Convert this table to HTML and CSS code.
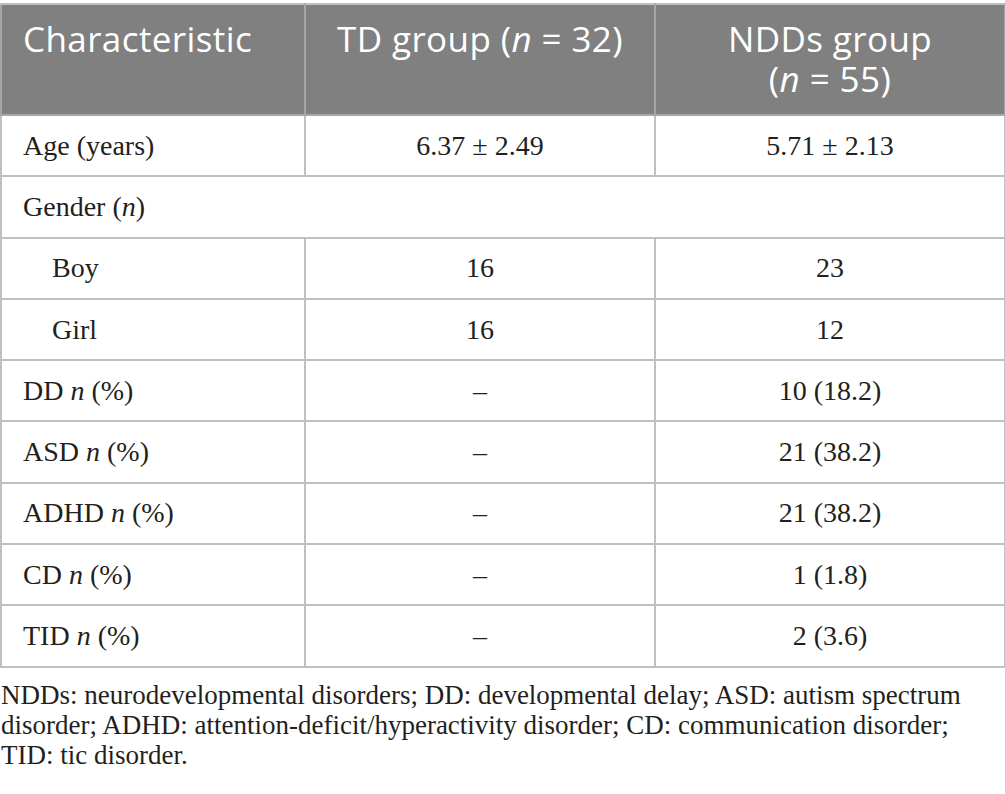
FILE: index.html
```html
<!DOCTYPE html>
<html lang="en">
<head>
<meta charset="utf-8">
<title>Table</title>
<link rel="stylesheet" href="styles.css">
</head>
<body>
<div class="page">
  <table class="data">
    <colgroup>
      <col class="c1">
      <col class="c2">
      <col class="c3">
    </colgroup>
    <thead>
      <tr>
        <th class="left">Characteristic</th>
        <th>TD group (<i>n</i> = 32)</th>
        <th>NDDs group<br>(<i>n</i> = 55)</th>
      </tr>
    </thead>
    <tbody>
      <tr><td class="label">Age (years)</td><td>6.37 ± 2.49</td><td>5.71 ± 2.13</td></tr>
      <tr><td class="label" colspan="3">Gender (<i>n</i>)</td></tr>
      <tr><td class="label sub">Boy</td><td>16</td><td>23</td></tr>
      <tr><td class="label sub">Girl</td><td>16</td><td>12</td></tr>
      <tr><td class="label">DD <i>n</i> (%)</td><td>–</td><td>10 (18.2)</td></tr>
      <tr><td class="label">ASD <i>n</i> (%)</td><td>–</td><td>21 (38.2)</td></tr>
      <tr><td class="label">ADHD <i>n</i> (%)</td><td>–</td><td>21 (38.2)</td></tr>
      <tr><td class="label">CD <i>n</i> (%)</td><td>–</td><td>1 (1.8)</td></tr>
      <tr><td class="label">TID <i>n</i> (%)</td><td>–</td><td>2 (3.6)</td></tr>
    </tbody>
  </table>
  <p class="note">NDDs: neurodevelopmental disorders; DD: developmental delay; ASD: autism spectrum disorder; ADHD: attention-deficit/hyperactivity disorder; CD: communication disorder; TID: tic disorder.</p>
</div>
</body>
</html>
```
FILE: styles.css
```css
html, body {
  margin: 0;
  padding: 0;
  background: #ffffff;
}

.page {
  width: 1005px;
  padding-top: 3px;
  font-family: "Liberation Serif", "Times New Roman", serif;
  color: #231f20;
}

.data {
  width: 1004px;
  border-collapse: collapse;
  table-layout: fixed;
}

.c1 { width: 304px; }
.c2 { width: 350px; }
.c3 { width: 350px; }

.data th {
  background: #808080;
  color: #ffffff;
  font-family: "Open Sans", "Noto Sans", sans-serif;
  font-weight: 400;
  font-size: 35px;
  line-height: 40px;
  letter-spacing: 0.4px;
  height: 111px;
  vertical-align: top;
  text-align: center;
  padding: 14px 8px 0;
  border: 2px solid #a6a6a6;
  border-top-color: #c0c0c0;
  box-sizing: border-box;
}

.data th.left {
  text-align: left;
  padding-left: 21px;
}

.data td {
  border: 2px solid #c0c0c0;
  height: 61.3px;
  box-sizing: border-box;
  padding: 0 10px;
  font-size: 28px;
  text-align: center;
  vertical-align: middle;
}

.data td.label {
  text-align: left;
  padding-left: 21px;
}

.data td.sub {
  padding-left: 50px;
}

.note {
  margin: 12px 0 0;
  padding: 0 30px 0 1px;
  font-size: 27px;
  line-height: 30px;
}
```
